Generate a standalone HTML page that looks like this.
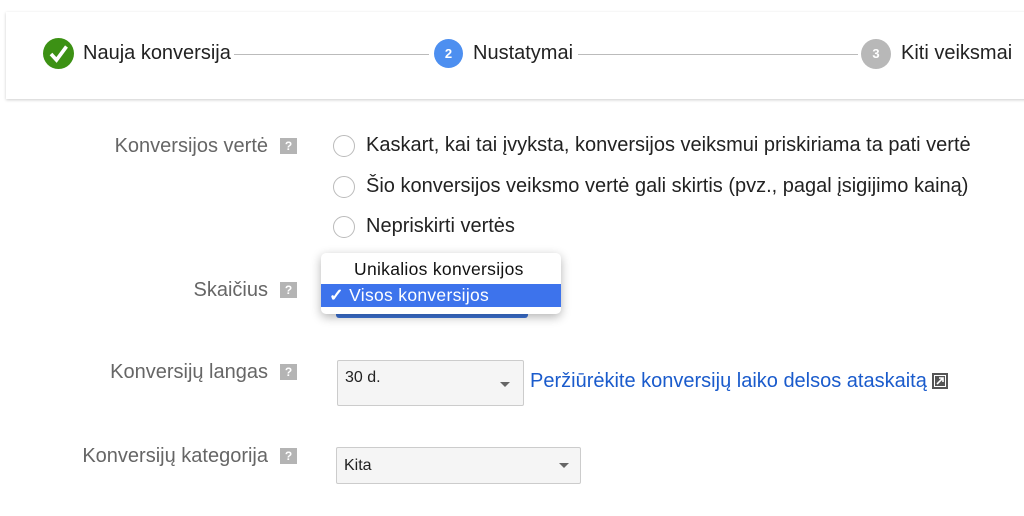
<!DOCTYPE html>
<html><head><meta charset="utf-8"><style>
body{margin:0;width:1024px;height:516px;background:#fff;position:relative;overflow:hidden;font-family:"Liberation Sans",Arial,sans-serif}
.a{position:absolute;white-space:nowrap}
.hdr{position:absolute;left:6px;top:12px;width:1030px;height:87px;background:#fff;box-shadow:0 1px 3px rgba(0,0,0,.2)}
.step{font-size:20px;color:#222}
.circ{position:absolute;border-radius:50%;color:#fff;font-size:13px;font-weight:bold;text-align:center}
.line{position:absolute;height:1px;background:#bbb;top:54px}
.lbl{font-size:20px;color:#666;text-align:right;width:300px}
.q{position:absolute;width:17px;height:16px;background:#b4b4b4;color:#fff;font-size:12px;font-weight:bold;text-align:center;line-height:16px}
.rad{position:absolute;width:20px;height:20px;border:1px solid #bbb;border-radius:50%;background:#fff;left:333px}
.rt{font-size:20px;color:#222;left:366px}
.sel{position:absolute;background:#f5f5f5;border:1px solid #ccc;border-radius:2px;font-size:16px;color:#222}
.arr{position:absolute;width:0;height:0;border-left:5px solid transparent;border-right:5px solid transparent;border-top:5px solid #666}
</style></head><body>
<div class="hdr"></div>
<div class="circ" style="left:43px;top:38px;width:31px;height:31px;background:#3c9114">
<svg width="31" height="31" viewBox="0 0 31 31"><path d="M8 16 L13.5 22 L23.5 8.5" fill="none" stroke="#fff" stroke-width="3.6"/></svg></div>
<div class="a step" style="left:83px;top:42px">Nauja konversija</div>
<div class="line" style="left:234px;width:195px"></div>
<div class="circ" style="left:434px;top:39px;width:29px;height:29px;line-height:29px;background:#4d8ff0">2</div>
<div class="a step" style="left:473px;top:42px">Nustatymai</div>
<div class="line" style="left:578px;width:280px"></div>
<div class="circ" style="left:861px;top:39px;width:30px;height:30px;line-height:30px;background:#b8b8b8">3</div>
<div class="a step" style="left:901px;top:42px">Kiti veiksmai</div>

<div class="a lbl" style="left:-32px;top:135px">Konversijos vertė</div>
<div class="q" style="left:280px;top:138px">?</div>
<div class="rad" style="top:135px"></div><div class="a rt" style="top:134px">Kaskart, kai tai įvyksta, konversijos veiksmui priskiriama ta pati vertė</div>
<div class="rad" style="top:176px"></div><div class="a rt" style="top:175px">Šio konversijos veiksmo vertė gali skirtis (pvz., pagal įsigijimo kainą)</div>
<div class="rad" style="top:216px"></div><div class="a rt" style="top:215px">Nepriskirti vertės</div>

<div class="a lbl" style="left:-32px;top:279px">Skaičius</div>
<div class="q" style="left:280px;top:282px">?</div>
<div class="a" style="left:336px;top:300px;width:192px;height:18px;background:#3d74d8;border-radius:3px"></div>
<div class="a" style="left:321px;top:253px;width:240px;height:61px;background:#fff;border-radius:5px;box-shadow:0 3px 10px rgba(0,0,0,.3)">
<div class="a" style="left:33px;top:6px;font-size:17.5px;color:#111;letter-spacing:.3px">Unikalios konversijos</div>
<div class="a" style="left:0;top:31px;width:240px;height:23px;background:#3d73ec"></div>
<div class="a" style="left:8px;top:32px;font-size:17.5px;color:#fff;letter-spacing:.3px"><b>✓</b> Visos konversijos</div>
</div>

<div class="a lbl" style="left:-32px;top:361px">Konversijų langas</div>
<div class="q" style="left:280px;top:364px">?</div>
<div class="sel" style="left:337px;top:360px;width:185px;height:44px"><span class="a" style="left:7px;top:8px">30 d.</span><div class="arr" style="left:162px;top:21px"></div></div>
<div class="a" style="left:530px;top:370px;font-size:20px;color:#1a5bcc">Peržiūrėkite konversijų laiko delsos ataskaitą</div>
<svg class="a" style="left:932px;top:373px" width="16" height="16" viewBox="0 0 16 16"><rect x="1" y="1" width="14" height="14" fill="#fff" stroke="#555" stroke-width="2"/><rect x="3" y="3" width="10" height="10" fill="#555"/><path d="M5 11 L11 5 M7 5 H11 V9" stroke="#fff" stroke-width="1.6" fill="none"/></svg>

<div class="a lbl" style="left:-32px;top:445px">Konversijų kategorija</div>
<div class="q" style="left:280px;top:448px">?</div>
<div class="sel" style="left:336px;top:447px;width:243px;height:35px"><span class="a" style="left:7px;top:9px">Kita</span><div class="arr" style="left:222px;top:15px"></div></div>
</body></html>
